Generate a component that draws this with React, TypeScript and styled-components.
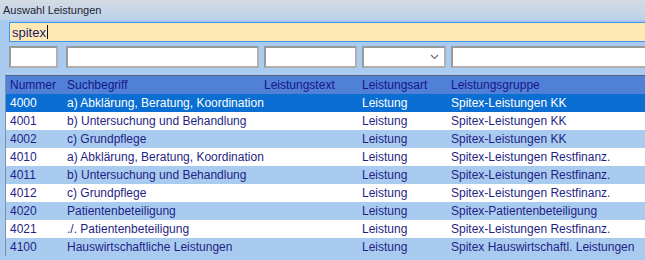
import React from 'react';
import styled, { createGlobalStyle } from 'styled-components';

const GlobalStyle = createGlobalStyle`
  html, body {
    margin: 0;
    padding: 0;
    background: #a9cbf0;
    overflow: hidden;
  }
`;

const Window = styled.div`
  width: 645px;
  height: 260px;
  background: #a9cbf0;
  font-family: 'Liberation Sans', Arial, sans-serif;
  overflow: hidden;
`;

const TitleBar = styled.div`
  height: 20px;
  padding-left: 3px;
  display: flex;
  align-items: center;
  background: linear-gradient(#d3dbe5, #bcd2ea);
  color: #1e2430;
  font-family: 'Liberation Sans', Arial, sans-serif;
  font-size: 11px;
`;

const SearchRow = styled.div`
  padding: 2px 0 0 9px;
`;

const SearchBox = styled.div`
  height: 18px;
  margin-right: -4px;
  border: 1px solid #3e95ea;
  background: #fee9b4;
  color: #1b1b6e;
  font-size: 13px;
  display: flex;
  align-items: center;
  padding-left: 2px;
`;

const Caret = styled.span`
  display: inline-block;
  width: 1px;
  height: 14px;
  margin-left: 1px;
  background: #111;
`;

const FilterRow = styled.div`
  display: grid;
  grid-template-columns: 52px 193px 93px 84px 1fr;
  column-gap: 5px;
  padding: 4px 0 0 9px;
  margin-right: -4px;
`;

const FilterBox = styled.div<{ $first?: boolean }>`
  height: 18px;
  background: #fff;
  border: 2px solid #9a9a9a;
  border-right-color: #b0b0b0;
  border-bottom-color: #b0b0b0;
  margin-right: ${(p) => (p.$first ? '3px' : '0')};
  display: flex;
  align-items: center;
  justify-content: flex-end;
  padding-right: 5px;
`;

const Grid = styled.div`
  margin: 7px 0 0 5px;
  border-left: 1px solid #7f8fa8;
  border-top: 1px solid #56657e;
`;

const cols = '57px 197px 98px 89px 1fr';

const HeaderRow = styled.div`
  display: grid;
  grid-template-columns: ${cols};
  height: 18px;
  align-items: center;
  background: #5181d7;
  color: #16168a;
  font-size: 12px;
`;

const Row = styled.div<{ $tone: 'sel' | 'white' | 'blue' }>`
  display: grid;
  grid-template-columns: ${cols};
  height: 18px;
  align-items: center;
  font-size: 12px;
  background: ${(p) =>
    p.$tone === 'sel' ? '#0a6ed2' : p.$tone === 'white' ? '#ffffff' : '#a9cbf0'};
  color: ${(p) => (p.$tone === 'sel' ? '#ffffff' : '#1f1f86')};
`;

const Cell = styled.div`
  padding-left: 4px;
  white-space: nowrap;
`;

const rows: [string, string, string, string][] = [
  ['4000', 'a) Abklärung, Beratung, Koordination', 'Leistung', 'Spitex-Leistungen KK'],
  ['4001', 'b) Untersuchung und Behandlung', 'Leistung', 'Spitex-Leistungen KK'],
  ['4002', 'c) Grundpflege', 'Leistung', 'Spitex-Leistungen KK'],
  ['4010', 'a) Abklärung, Beratung, Koordination', 'Leistung', 'Spitex-Leistungen Restfinanz.'],
  ['4011', 'b) Untersuchung und Behandlung', 'Leistung', 'Spitex-Leistungen Restfinanz.'],
  ['4012', 'c) Grundpflege', 'Leistung', 'Spitex-Leistungen Restfinanz.'],
  ['4020', 'Patientenbeteiligung', 'Leistung', 'Spitex-Patientenbeteiligung'],
  ['4021', './. Patientenbeteiligung', 'Leistung', 'Spitex-Leistungen Restfinanz.'],
  ['4100', 'Hauswirtschaftliche Leistungen', 'Leistung', 'Spitex Hauswirtschaftl. Leistungen'],
];

const Chevron = () => (
  <svg width="9" height="6" viewBox="0 0 9 6">
    <path d="M1 1 L4.5 4.5 L8 1" fill="none" stroke="#707070" strokeWidth="1.2" />
  </svg>
);

const App: React.FC = () => {
  return (
    <Window>
      <GlobalStyle />
      <TitleBar>Auswahl Leistungen</TitleBar>
      <SearchRow>
        <SearchBox>
          spitex
          <Caret />
        </SearchBox>
      </SearchRow>
      <FilterRow>
        <FilterBox $first />
        <FilterBox />
        <FilterBox />
        <FilterBox>
          <Chevron />
        </FilterBox>
        <FilterBox />
      </FilterRow>
      <Grid>
        <HeaderRow>
          <Cell>Nummer</Cell>
          <Cell>Suchbegriff</Cell>
          <Cell>Leistungstext</Cell>
          <Cell>Leistungsart</Cell>
          <Cell>Leistungsgruppe</Cell>
        </HeaderRow>
        {rows.map((r, i) => (
          <Row key={r[0]} $tone={i === 0 ? 'sel' : i % 2 === 1 ? 'white' : 'blue'}>
            <Cell>{r[0]}</Cell>
            <Cell>{r[1]}</Cell>
            <Cell />
            <Cell>{r[2]}</Cell>
            <Cell>{r[3]}</Cell>
          </Row>
        ))}
      </Grid>
    </Window>
  );
};

export default App;
